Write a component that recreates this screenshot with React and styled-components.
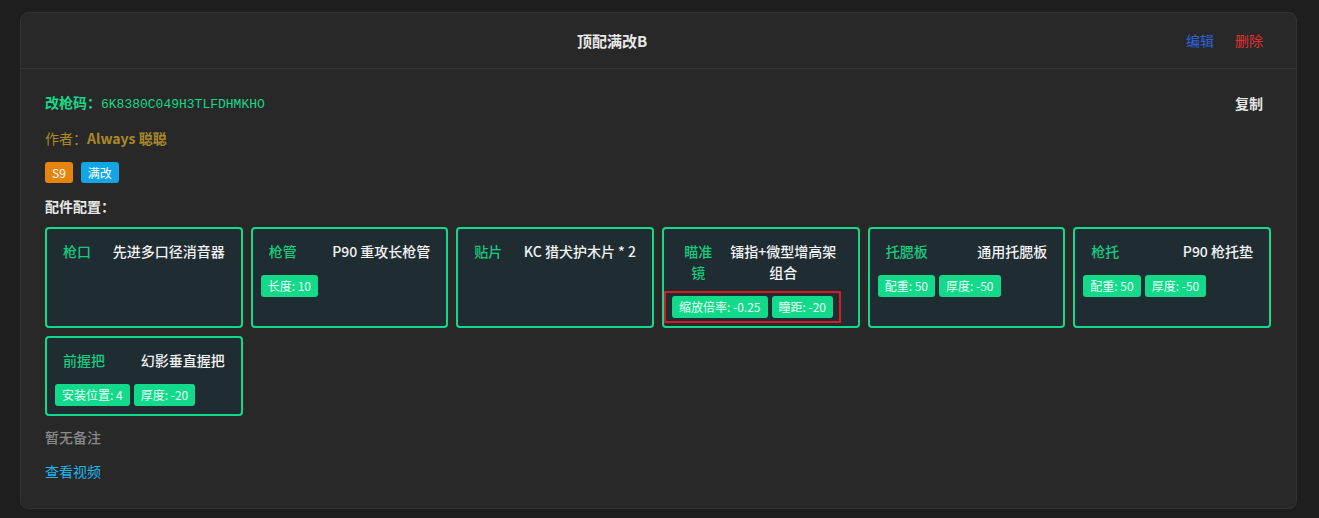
import React from 'react';
import styled, { createGlobalStyle } from 'styled-components';

const GlobalStyle = createGlobalStyle`
    html, body {
        margin: 0;
        padding: 0;
        background-color: #1e1e1e;
    }
    body {
        font-family: "Noto Sans CJK SC", "Noto Sans", sans-serif;
        font-size: 14px;
        color: #e6e6e6;
    }
`;

const parts = [
    { label: '枪口', name: '先进多口径消音器', attrs: [] },
    { label: '枪管', name: 'P90 重攻长枪管', attrs: ['长度: 10'] },
    { label: '贴片', name: 'KC 猎犬护木片 * 2', attrs: [] },
    { label: '瞄准镜', name: '镭指+微型增高架组合', attrs: ['缩放倍率: -0.25', '瞳距: -20'], marked: true },
    { label: '托腮板', name: '通用托腮板', attrs: ['配重: 50', '厚度: -50'] },
    { label: '枪托', name: 'P90 枪托垫', attrs: ['配重: 50', '厚度: -50'] },
    { label: '前握把', name: '幻影垂直握把', attrs: ['安装位置: 4', '厚度: -20'] },
];

const App = () => {
    return (
        <Page>
            <GlobalStyle />
            <Card>
                <Header>
                    <Title>顶配满改B</Title>
                    <Actions>
                        <TextButton $color="#2f62dc">编辑</TextButton>
                        <TextButton $color="#e0302f">删除</TextButton>
                    </Actions>
                </Header>
                <Body>
                    <CodeRow>
                        <CodeLabel>
                            改枪码：<Code>6K8380C049H3TLFDHMKHO</Code>
                        </CodeLabel>
                        <CopyButton>复制</CopyButton>
                    </CodeRow>
                    <Author>
                        作者：<AuthorName>Always 聪聪</AuthorName>
                    </Author>
                    <Tags>
                        <Tag $bg="#e5850f">S9</Tag>
                        <Tag $bg="#12a6e6">满改</Tag>
                    </Tags>
                    <SectionTitle>配件配置：</SectionTitle>
                    <PartGrid>
                        {parts.map((p) => (
                            <PartCard key={p.label}>
                                <PartRow>
                                    <PartLabel>{p.label}</PartLabel>
                                    <PartName>{p.name}</PartName>
                                </PartRow>
                                {p.attrs.length > 0 && (
                                    <AttrList $marked={p.marked}>
                                        {p.attrs.map((a) => (
                                            <Attr key={a}>{a}</Attr>
                                        ))}
                                    </AttrList>
                                )}
                            </PartCard>
                        ))}
                    </PartGrid>
                    <Note>暂无备注</Note>
                    <VideoLink>查看视频</VideoLink>
                </Body>
            </Card>
        </Page>
    );
};

export default App;

const Page = styled.div`
    padding: 12px 22px 10px 20px;
`;

const Card = styled.div`
    background-color: #282828;
    border: 1px solid #323232;
    border-radius: 8px;
`;

const Header = styled.div`
    height: 55px;
    display: flex;
    align-items: center;
    padding: 0 25px;
    border-bottom: 1px solid #343434;
`;

const Title = styled.div`
    flex: 1;
    text-align: center;
    font-weight: 700;
    font-size: 15px;
    color: #e8e8e8;
`;

const Actions = styled.div`
    display: flex;
    gap: 5px;
`;

const TextButton = styled.span`
    padding: 0 8px;
    color: ${(p) => p.$color};
    font-size: 14px;
    line-height: 21px;
    cursor: pointer;
`;

const Body = styled.div`
    padding: 23px 25px 26px 24px;
    display: flex;
    flex-direction: column;
`;

const CodeRow = styled.div`
    display: flex;
    justify-content: space-between;
    align-items: center;
    line-height: 21px;
`;

const CodeLabel = styled.div`
    color: #14d98a;
    font-weight: 700;
`;

const Code = styled.span`
    font-family: "Liberation Mono", monospace;
    font-size: 13px;
    font-weight: 400;
`;

const CopyButton = styled.span`
    color: #e4e4e4;
    font-weight: 700;
    padding-right: 8px;
`;

const Author = styled.div`
    margin-top: 13px;
    line-height: 21px;
    color: #ab8a26;
`;

const AuthorName = styled.span`
    font-weight: 700;
`;

const Tags = styled.div`
    margin-top: 13px;
    display: flex;
    gap: 8px;
`;

const Tag = styled.span`
    background-color: ${(p) => p.$bg};
    color: #fff;
    font-size: 12px;
    height: 21px;
    line-height: 21px;
    padding: 0 7px;
    border-radius: 3px;
`;

const SectionTitle = styled.div`
    margin-top: 13px;
    line-height: 21px;
    font-weight: 700;
    color: #e8e8e8;
`;

const PartGrid = styled.div`
    margin-top: 10px;
    display: grid;
    grid-template-columns: repeat(6, 1fr);
    gap: 8px;
`;

const PartCard = styled.div`
    background-color: #1f2d33;
    border: 2px solid #13d98a;
    border-radius: 4px;
    padding: 12px 0 3px;
`;

const PartRow = styled.div`
    display: flex;
    justify-content: space-between;
    gap: 8px;
    padding: 0 16px;
    line-height: 21px;
    text-align: center;
`;

const PartLabel = styled.div`
    color: #17c97e;
    font-weight: 500;
`;

const PartName = styled.div`
    color: #f2f2f2;
    font-weight: 500;
`;

const AttrList = styled.div`
    margin-top: 8px;
    display: inline-flex;
    gap: 4px;
    padding: 3px 6px;
    border: 2px solid ${(p) => (p.$marked ? '#e0161f' : 'transparent')};
`;

const Attr = styled.span`
    background-color: #13d98a;
    color: #eafff5;
    font-size: 12px;
    height: 22px;
    line-height: 22px;
    padding: 0 7px;
    border-radius: 3px;
    white-space: nowrap;
`;

const Note = styled.div`
    margin-top: 11px;
    line-height: 21px;
    color: #8a8a8a;
    font-weight: 500;
`;

const VideoLink = styled.div`
    margin-top: 13px;
    line-height: 21px;
    color: #1cb6ec;
`;
